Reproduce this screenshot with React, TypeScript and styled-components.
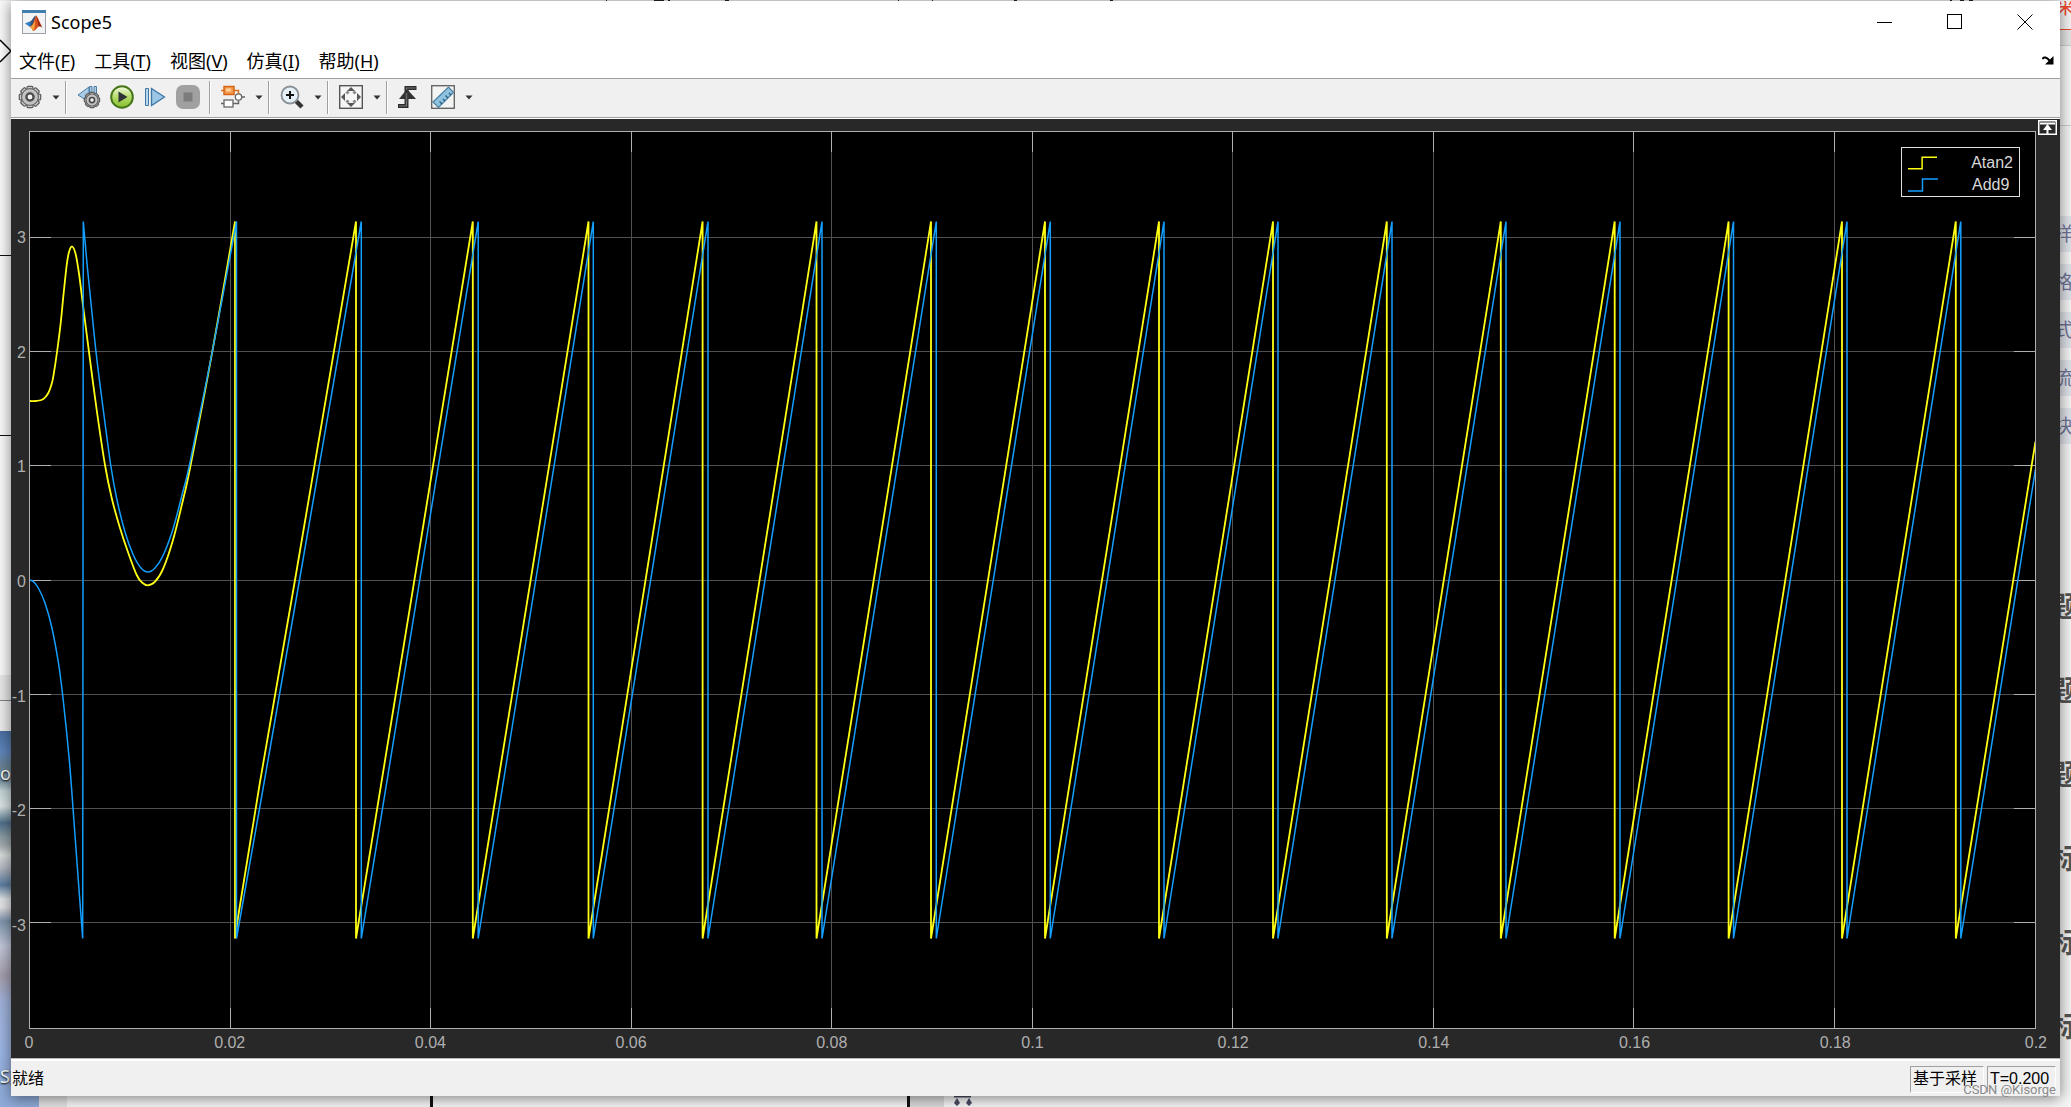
import React from "react";
import styled, { createGlobalStyle } from "styled-components";

const uiFont = `"Noto Sans", "Noto Sans CJK SC", sans-serif`;
const plotFont = `"Liberation Sans", "Noto Sans CJK SC", sans-serif`;

const GlobalStyle = createGlobalStyle`
  * { box-sizing: border-box; }
  body { margin: 0; background: #f4f4f4; font-family: ${uiFont}; }
  svg { display: block; }
`;

/* ---------- desktop behind the window ---------- */

const Desktop = styled.div`
  display: grid;
  grid-template-columns: 11px minmax(0, 1fr) 11px;
  grid-template-rows: 1px minmax(0, 1fr) 11px;
  height: 100vh;
  overflow: hidden;
`;

const TopStrip = styled.div`
  grid-column: 1 / 4;
  background: #ededed;
  display: flex;
`;

const Speck = styled.span<{ $gap: number; $w: number }>`
  width: ${(p) => p.$w}px;
  height: 1px;
  margin-left: ${(p) => p.$gap}px;
  background: #222;
`;

const LeftStrip = styled.div`
  display: flex;
  flex-direction: column;
  overflow: hidden;
  background: #fafafa;
`;

const LeftBlock = styled.div<{ $h: number; $bg?: string; $line?: string }>`
  flex: 0 0 ${(p) => p.$h}px;
  background: ${(p) => p.$bg || "#fafafa"};
  border-bottom: ${(p) => (p.$line ? `1px solid ${p.$line}` : "0")};
`;

const WireTip = styled.svg`
  flex-shrink: 0;
`;

const Wallpaper = styled.div`
  flex: 1;
  display: flex;
  flex-direction: column;
  justify-content: space-between;
  padding: 30px 0 8px;
  overflow: hidden;
  color: #fff;
  font-size: 18px;
  line-height: 24px;
  text-shadow: 0 1px 2px #000;
  white-space: nowrap;
  background: linear-gradient(
    #4a6f9f 0, #5f86bd 20px, #6a8292 36px, #7b93a0 50px, #c4d4d6 60px, #dce5e6 75px,
    #50708a 92px, #8d9da5 106px, #a3abb0 114px, #d8dedd 124px, #b9bcc4 136px, #5b7ea0 154px,
    #dfe4e4 168px, #e5e3e6 176px, #7f95ad 190px, #c3c9dc 215px, #a79fae 245px, #a1b3da 270px,
    #9db7e6 320px, #8fabd9 365px
  );
`;

const RightStrip = styled.div`
  display: flex;
  flex-direction: column;
  overflow: hidden;
  background: #f5f5f5;
`;

const RedTab = styled.div`
  flex: 0 0 29px;
  border-bottom: 1px solid #f04a2d;
  color: #f04a2d;
  font-size: 20px;
  line-height: 12px;
  display: flex;
  justify-content: center;
`;

const GreyTab = styled.div<{ $h: number; $bg: string }>`
  flex: 0 0 ${(p) => p.$h}px;
  background: ${(p) => p.$bg};
  border-bottom: 1px solid #cfcfcf;
`;

const Tags = styled.div`
  display: flex;
  flex-direction: column;
  gap: 12px;
  padding-top: 90px;
`;

const Tag = styled.span`
  display: flex;
  justify-content: center;
  height: 36px;
  padding-right: 4px;
  background: #dfe4ea;
  color: #6f7396;
  font-size: 19px;
  line-height: 36px;
`;

const Headings = styled.div`
  display: flex;
  flex-direction: column;
  gap: 44px;
  padding-top: 142px;
`;

const Heading = styled.span`
  display: flex;
  justify-content: center;
  color: #555;
  font-size: 28px;
  font-weight: 700;
  line-height: 40px;
`;

const BottomStrip = styled.div`
  grid-column: 1 / 4;
  display: flex;
  background: #f7f7f7;
  overflow: hidden;
`;

const BottomBlock = styled.div<{ $w: number; $bg?: string; $edge?: string }>`
  flex: 0 0 ${(p) => p.$w}px;
  background: ${(p) => p.$bg || "#f7f7f7"};
  border-right: ${(p) => (p.$edge ? `3px solid ${p.$edge}` : "0")};
`;

/* ---------- window ---------- */

const Window = styled.main`
  position: relative;
  z-index: 1;
  display: flex;
  flex-direction: column;
  min-width: 0;
  background: #fff;
  box-shadow: 0 2px 14px rgba(0, 0, 0, 0.5);
`;

const TitleBar = styled.header`
  display: flex;
  align-items: center;
  height: 42px;
  padding: 0 0 0 11px;
`;

const Title = styled.h1`
  flex: 1;
  margin: 0 0 0 5px;
  font-size: 18px;
  line-height: 24px;
  font-weight: 400;
  color: #000;
`;

const CaptionButton = styled.button`
  display: grid;
  place-items: center;
  width: 70px;
  height: 42px;
  padding: 0;
  border: 0;
  background: transparent;
`;

const MenuBar = styled.nav`
  display: flex;
  align-items: center;
  gap: 19px;
  height: 35px;
  padding: 0 6px 0 8px;
`;

const MenuButton = styled.button`
  padding: 0;
  border: 0;
  background: transparent;
  color: #000;
  font-family: ${uiFont};
  font-size: 18px;
  line-height: 26px;
  white-space: nowrap;

  u { text-underline-offset: 2px; text-decoration-thickness: 1px; }
`;

const DockButton = styled.button`
  margin-left: auto;
  padding: 0;
  border: 0;
  background: transparent;
`;

const Toolbar = styled.div`
  display: flex;
  align-items: center;
  height: 40px;
  padding: 0 7px 2px;
  border-top: 1px solid #a0a0a0;
  border-bottom: 1px solid #a0a0a0;
  background: #f0f0f0;
`;

const ToolButton = styled.button<{ $gap?: boolean }>`
  width: 24px;
  height: 24px;
  margin-left: ${(p) => (p.$gap ? 9 : 0)}px;
  padding: 0;
  border: 0;
  background: transparent;
`;

const CaretButton = styled.button`
  display: grid;
  place-items: center;
  width: 12px;
  height: 24px;
  margin-left: 8px;
  padding: 0;
  border: 0;
  background: transparent;
`;

const Separator = styled.span<{ $before: number }>`
  width: 2px;
  height: 33px;
  margin: 0 10px 0 ${(p) => p.$before}px;
  border-left: 1px solid #a0a0a0;
  border-right: 1px solid #fff;
`;

/* ---------- scope display ---------- */

const Display = styled.section`
  position: relative;
  flex: 1;
  min-height: 0;
  display: grid;
  grid-template-columns: 18px minmax(0, 1fr);
  grid-template-rows: minmax(0, 1fr) 29px;
  margin-top: 1px;
  padding: 12px 24px 0 0;
  background: #282828;
  color: #afafaf;
  font-family: ${plotFont};
  font-size: 16px;
`;

const YAxis = styled.div`
  display: flex;
  flex-direction: column;
  padding-right: 3px;

  &::before, &::after { content: ""; flex: 0.43; }
`;

const YTick = styled.span`
  flex: 1;
  display: flex;
  align-items: center;
  justify-content: flex-end;
  padding-top: 4px;
`;

const Plot = styled.div`
  position: relative;
  min-width: 0;
  min-height: 0;
  border: 1px solid #afafaf;
  background: #000;
`;

const Traces = styled.svg`
  width: 100%;
  height: 100%;

  path { fill: none; vector-effect: non-scaling-stroke; }
`;

const XAxis = styled.div`
  grid-column: 2;
  display: flex;
  justify-content: space-between;
  padding-top: 4px;
  line-height: 20px;
`;

const XTick = styled.span`
  display: flex;
  justify-content: center;
  width: 0;
`;

const Legend = styled.ul`
  position: absolute;
  top: 15px;
  right: 15px;
  width: 119px;
  margin: 0;
  padding: 4px 6px 0 6px;
  list-style: none;
  border: 1px solid #e0e0e0;
  background: #000;
  color: #d8d8d8;
`;

const LegendItem = styled.li`
  display: flex;
  align-items: center;
  gap: 34px;
  height: 22px;
  line-height: 22px;
`;

const MaximizeAxes = styled.button`
  position: absolute;
  top: 1px;
  right: 3px;
  padding: 0;
  border: 0;
  background: transparent;
`;

const StatusBar = styled.footer`
  position: relative;
  display: flex;
  align-items: center;
  gap: 3px;
  height: 38px;
  padding: 3px 4px 0 1px;
  border-top: 1px solid #b8b8b8;
  background: linear-gradient(#fff 2px, #f0f0f0 2px);
  font-family: ${plotFont};
  font-size: 16px;
  line-height: 24px;
  color: #000;
`;

const Ready = styled.span`
  flex: 1;
`;

const StatusCell = styled.span<{ $w: number }>`
  width: ${(p) => p.$w}px;
  height: 27px;
  padding-left: 2px;
  border: 1px solid;
  border-color: #a0a0a0 #fff #fff #a0a0a0;
`;

const Watermark = styled.span`
  position: absolute;
  right: 4px;
  bottom: -2px;
  color: #8a8a8a;
  font-family: Roboto, sans-serif;
  font-size: 13px;
  line-height: 16px;
`;

/* ---------- data ---------- */

type Pt = [number, number];
const W = 2005;
const H = 896;
const TOP = 221.5;
const BOTTOM = 938.5;

const yellowCurve: Pt[] = [
  [30, 401], [36, 401], [41.5, 400], [45, 397.5], [48.3, 393], [51, 386], [53.3, 376.7], [57.3, 350],
  [60.7, 323], [63.3, 296.7], [66.7, 265], [69, 252], [72, 246.5], [75.5, 253.5], [79, 273.5],
  [82.7, 303], [88.3, 346.7], [96.7, 410], [105, 465], [111.7, 498], [120, 528], [128.3, 553],
  [136.7, 575], [142, 582.5], [148, 585.3], [155, 581.7], [163.3, 568.3],
  [173, 540], [183, 500], [190.3, 466.7], [212.3, 351.7], [235, TOP],
];
const yellowRecovery: Pt[] = [[235, BOTTOM], [240, 905], [260, 782], [295, 580], [356, TOP]];

const blueFall: Pt[] = [
  [30, 580], [33.3, 581.5], [38.3, 588], [45, 603], [51.7, 627], [58.3, 662], [63, 698], [69, 756.7],
  [73, 808], [78.3, 880], [82.7, BOTTOM],
];
const blueCurve: Pt[] = [
  [83.3, TOP], [87.3, 266.7], [91.7, 310], [96, 351.7], [102, 400],
  [110.7, 465], [117, 500], [125, 532], [133.3, 555], [141, 568], [148, 572], [155, 568],
  [163.3, 555], [173.3, 528], [183.3, 490], [190.5, 460], [212.3, 351.7], [236.5, TOP],
];
const blueRecovery: Pt[] = [[236.5, BOTTOM], [260, 806], [299.5, 580], [361.3, TOP]];

const yellowDrops = [356, 472.8, 588.5, 702.6, 816.5, 931, 1045, 1159, 1273, 1386.8, 1500.8, 1614.7, 1728.6, 1842, 1955.8];
const blueDrops = [361.3, 478.2, 593.3, 708, 822, 936.3, 1050.3, 1164, 1278, 1392, 1506, 1620, 1733.5, 1847, 1960.8];

const at = ([x, y]: Pt) => `${(x - 30).toFixed(1)} ${(y - 132).toFixed(1)}`;

// Catmull-Rom spline through the points, written as cubic segments.
const smooth = (pts: Pt[]) =>
  pts
    .slice(1)
    .map((p2, i) => {
      const p1 = pts[i];
      const p0 = pts[i - 1] || p1;
      const p3 = pts[i + 2] || p2;
      const c1: Pt = [p1[0] + (p2[0] - p0[0]) / 6, p1[1] + (p2[1] - p0[1]) / 6];
      const c2: Pt = [p2[0] - (p3[0] - p1[0]) / 6, p2[1] - (p3[1] - p1[1]) / 6];
      return `C${at(c1)} ${at(c2)} ${at(p2)}`;
    })
    .join("");

const toPath = (curves: Pt[][], drops: number[], end: Pt) => {
  const teeth = drops.flatMap<Pt>((x) => [[x, TOP], [x, BOTTOM]]);
  const start = curves.map((c, i) => (i ? "L" : "M") + at(c[0]) + smooth(c)).join("");
  return start + [...teeth, end].map((p) => "L" + at(p)).join("");
};

const yellowPath = toPath([yellowCurve, yellowRecovery], yellowDrops, [2035.5, 441.5]);
const bluePath = toPath([blueFall, blueCurve, blueRecovery], blueDrops, [2035.5, 469]);

const gridX = Array.from({ length: 9 }, (_, i) => Math.floor(200.45 * (i + 1)) + 0.5);
const gridY = [105.5, 219.5, 333.5, 448.5, 562.5, 676.5, 790.5];

const gridPath = gridX.map((x) => `M${x} 0V${H}`).join("") + gridY.map((y) => `M0 ${y}H${W}`).join("");
const tickPath =
  gridX.map((x) => `M${x} 0V20M${x} ${H - 20}V${H}`).join("") +
  gridY.map((y) => `M0 ${y}H21M${W - 21} ${y}H${W}`).join("");

const yTicks = ["3", "2", "1", "0", "-1", "-2", "-3"];
const xTicks = ["0", "0.02", "0.04", "0.06", "0.08", "0.1", "0.12", "0.14", "0.16", "0.18", "0.2"];
const menus: [string, string][] = [["文件", "F"], ["工具", "T"], ["视图", "V"], ["仿真", "I"], ["帮助", "H"]];
const legend: [string, string][] = [["Atan2", "#ffff13"], ["Add9", "#149fff"]];
const specks: [number, number][] = [[606, 1], [47, 10], [4, 2], [55, 4], [169, 1], [33, 1], [81, 3], [93, 3], [837, 2], [8, 4], [5, 4]];

/* ---------- icons ---------- */

const MatlabIcon = () => (
  <svg width="24" height="24" viewBox="0 0 24 24">
    <rect x="0.5" y="0.5" width="23" height="23" fill="#f1f3f5" stroke="#9aa0a6" />
    <path d="M0 0h24v3H0z" fill="#3f7fae" />
    <path d="M3 13.5l6-2.5 2.5 3L8 17z" fill="#2f7fc0" />
    <path d="M9 11c2-1.500 3-5.500 5-5.500L11.500 14 8 17z" fill="#35507c" />
    <path d="M14 5.500c2 1 4 8 6.500 12-2-1.500-3.500-1.500-4.500-.5-1.500 1.500-2.500 3.500-5 4-.5-1.500-1.500-3-3-4C11.500 16 12.500 8 14 5.500z" fill="#d9531e" />
    <path d="M8 17c2-.6 3.500-3 4.800-6.500.8 3 .2 8-1.800 10.500-.5-1.500-1.500-3-3-4z" fill="#f2a23a" />
    <path d="M14 5.500c1.500 2 3.500 8.500 6.500 12-1.500-1.200-2.700-1.500-3.700-1.100C16 13 15 9 14 5.500z" fill="#8f2315" />
  </svg>
);

const GearShape = ({ cx, cy, r }: { cx: number; cy: number; r: number }) => (
  <g>
    {Array.from({ length: 8 }, (_, i) => (
      <rect
        key={i}
        x={cx - r * 0.28}
        y={cy - r * 1.02}
        width={r * 0.56}
        height={r * 0.5}
        rx={r * 0.1}
        fill="#c9c9c9"
        stroke="#5a5a5a"
        strokeWidth="1.200"
        transform={`rotate(${i * 45} ${cx} ${cy})`}
      />
    ))}
    <circle cx={cx} cy={cy} r={r * 0.8} fill="#cfcfcf" stroke="#666" strokeWidth="1.200" />
    <circle cx={cx} cy={cy} r={r * 0.66} fill="#c0c0c0" />
    <circle cx={cx} cy={cy} r={r * 0.34} fill="#f4f4f4" stroke="#4a4a4a" strokeWidth={r * 0.22} />
  </g>
);

const GearIcon = () => (
  <svg width="24" height="24" viewBox="0 0 24 24"><GearShape cx={12} cy={12} r={10.500} /></svg>
);

const StepBackIcon = () => (
  <svg width="24" height="24" viewBox="0 0 24 24">
    <path d="M1 10L12 2v15z" fill="#a9cbe6" stroke="#4c7da6" />
    <path d="M12.500 1.500H15V14h-2.500zM17 1.500h2.500V14H17z" fill="#a9cbe6" stroke="#4c7da6" />
    <GearShape cx={15} cy={15} r={7.500} />
  </svg>
);

const RunIcon = () => (
  <svg width="24" height="24" viewBox="0 0 24 24">
    <defs>
      <linearGradient id="run" x1="0" y1="0" x2="0" y2="1">
        <stop offset="0" stopColor="#f5fbe6" />
        <stop offset="0.500" stopColor="#b5dc6a" />
        <stop offset="1" stopColor="#84bd2c" />
      </linearGradient>
    </defs>
    <circle cx="12" cy="12" r="10.800" fill="url(#run)" stroke="#46751a" strokeWidth="2" />
    <path d="M8.500 6.500L17.500 12l-9 5.500z" fill="#2f3336" />
  </svg>
);

const StepForwardIcon = () => (
  <svg width="24" height="24" viewBox="0 0 24 24">
    <path d="M2.500 3.500h3v17h-3z" fill="#b8d7ee" stroke="#3f76a3" />
    <path d="M8.500 3.500L21.500 12l-13 8.500z" fill="#9cc6e6" stroke="#3f76a3" strokeWidth="1.300" />
  </svg>
);

const StopIcon = () => (
  <svg width="24" height="24" viewBox="0 0 24 24">
    <rect width="24" height="24" rx="7" fill="#a0a0a0" />
    <rect x="7.500" y="7.500" width="9" height="9" fill="#7c7c7c" />
  </svg>
);

const BlocksIcon = () => (
  <svg width="24" height="24" viewBox="0 0 24 24">
    <path d="M17.500 15v3.500H12M0 18.500h3M21 12h3" fill="none" stroke="#666" strokeWidth="1.500" />
    <path d="M0 5.500h3M13 5.500h4.500v4" fill="none" stroke="#d9731d" strokeWidth="1.500" />
    <rect x="3" y="1.500" width="10" height="8" fill="#f49a4a" stroke="#d8661a" strokeWidth="1.500" />
    <rect x="5" y="3.500" width="5" height="3" fill="#fbd09e" />
    <rect x="3" y="15" width="9" height="7" fill="#fff" stroke="#666" strokeWidth="1.300" />
    <circle cx="17.500" cy="12" r="3.200" fill="#fff" stroke="#666" strokeWidth="1.300" />
  </svg>
);

const ZoomInIcon = () => (
  <svg width="24" height="24" viewBox="0 0 24 24">
    <path d="M16 16l6 6" stroke="#333" strokeWidth="4.500" />
    <circle cx="10" cy="10" r="8.500" fill="#e6f1f7" stroke="#8b9297" strokeWidth="1.800" />
    <path d="M10 6v8M6 10h8" stroke="#111" strokeWidth="2" />
  </svg>
);

const FitIcon = () => (
  <svg width="24" height="24" viewBox="0 0 24 24">
    <rect x="0.700" y="0.700" width="22.600" height="22.600" fill="#f6f6f6" stroke="#555" strokeWidth="1.400" />
    <path d="M12 2l4 4H8zM12 22l4-4H8zM2 12l4-4v8zM22 12l-4-4v8z" fill="#555" />
    <path d="M7.500 6.500l2 2M16.500 6.500l-2 2M7.500 17.500l2-2M16.500 17.500l-2-2" stroke="#888" strokeWidth="3" />
  </svg>
);

const TriggerIcon = () => (
  <svg width="24" height="24" viewBox="0 0 24 24">
    <path d="M0 21h8.500V3H18.500" fill="none" stroke="#2c2c2c" strokeWidth="4" />
    <path d="M1 21h7.500V3H17.500" fill="none" stroke="#777" strokeWidth="1.200" />
    <path d="M9 4l9 10H1z" fill="#333" />
    <path d="M8.500 17V8" stroke="#666" strokeWidth="1.500" />
  </svg>
);

const RulerIcon = () => (
  <svg width="24" height="24" viewBox="0 0 24 24">
    <rect x="0.700" y="0.700" width="22.600" height="22.600" fill="#f4f4f4" stroke="#666" strokeWidth="1.400" />
    <path d="M2 17L17.500 2l5 5.500L7.500 22.500z" fill="#8fc3e0" stroke="#4b7f9f" strokeWidth="1.200" />
    <path d="M11 19l-2.500-2.500M14 16l-2-2M17 13l-2.500-2.500M20 10l-2-2" stroke="#2d5c7d" strokeWidth="1.300" />
  </svg>
);

const Caret = () => (
  <CaretButton aria-label="more">
    <svg width="8" height="5" viewBox="0 0 8 5"><path d="M0.500 0.500h7L4 4.500z" fill="#333" /></svg>
  </CaretButton>
);

const StepGlyph = ({ color }: { color: string }) => (
  <svg width="30" height="14" viewBox="0 0 30 14">
    <path d="M0 13h14.500V1H30" fill="none" stroke={color} strokeWidth="1.500" />
  </svg>
);

/* ---------- page ---------- */

export default function App() {
  return (
    <Desktop>
      <GlobalStyle />
      <TopStrip aria-hidden="true">
        {specks.map(([gap, w], i) => <Speck key={i} $gap={gap} $w={w} />)}
      </TopStrip>

      <LeftStrip aria-hidden="true">
        <LeftBlock $h={38} />
        <WireTip width="11" height="24" viewBox="0 0 11 24">
          <path d="M0 1L11 12 0 23" fill="#fff" stroke="#000" strokeWidth="1.500" />
        </WireTip>
        <LeftBlock $h={193} $line="#111" />
        <LeftBlock $h={180} $line="#111" />
        <LeftBlock $h={239} />
        <LeftBlock $h={26} $bg="#e8e8e8" $line="#7b8088" />
        <LeftBlock $h={30} $bg="#ececec" />
        <Wallpaper>
          <span>o</span>
          <span>SI</span>
        </Wallpaper>
      </LeftStrip>

      <Window>
        <TitleBar>
          <MatlabIcon />
          <Title>Scope5</Title>
          <CaptionButton aria-label="Minimize">
            <svg width="16" height="16"><path d="M0 8.500h15" stroke="#000" /></svg>
          </CaptionButton>
          <CaptionButton aria-label="Maximize">
            <svg width="16" height="16"><rect x="0.500" y="0.500" width="14" height="14" fill="none" stroke="#000" /></svg>
          </CaptionButton>
          <CaptionButton aria-label="Close">
            <svg width="16" height="16"><path d="M0.500 0.500l15 15M15.500 0.500l-15 15" stroke="#000" /></svg>
          </CaptionButton>
        </TitleBar>

        <MenuBar>
          {menus.map(([name, key]) => (
            <MenuButton key={key}>{name}(<u>{key}</u>)</MenuButton>
          ))}
          <DockButton aria-label="Dock">
            <svg width="12" height="9" viewBox="0 0 12 9">
              <path d="M0.500 3C2 0.500 4.500 1 8 5" fill="none" stroke="#000" strokeWidth="2" />
              <path d="M11.500 0v8.500H3z" fill="#000" />
            </svg>
          </DockButton>
        </MenuBar>

        <Toolbar>
          <ToolButton aria-label="Configuration"><GearIcon /></ToolButton>
          <Caret />
          <Separator $before={3} />
          <ToolButton aria-label="Step back"><StepBackIcon /></ToolButton>
          <ToolButton $gap aria-label="Run"><RunIcon /></ToolButton>
          <ToolButton $gap aria-label="Step forward"><StepForwardIcon /></ToolButton>
          <ToolButton $gap aria-label="Stop"><StopIcon /></ToolButton>
          <Separator $before={9} />
          <ToolButton aria-label="Highlight block"><BlocksIcon /></ToolButton>
          <Caret />
          <Separator $before={3} />
          <ToolButton aria-label="Zoom in"><ZoomInIcon /></ToolButton>
          <Caret />
          <Separator $before={3} />
          <ToolButton aria-label="Fit to view"><FitIcon /></ToolButton>
          <Caret />
          <Separator $before={3} />
          <ToolButton aria-label="Trigger"><TriggerIcon /></ToolButton>
          <ToolButton $gap aria-label="Measurements"><RulerIcon /></ToolButton>
          <Caret />
        </Toolbar>

        <Display>
          <YAxis>{yTicks.map((t) => <YTick key={t}>{t}</YTick>)}</YAxis>
          <Plot>
            <Traces viewBox={`0 0 ${W} ${H}`} preserveAspectRatio="none">
              <path d={gridPath} stroke="#505050" />
              <path d={tickPath} stroke="#afafaf" />
              <path d={yellowPath} stroke="#ffff13" strokeWidth="1.800" />
              <path d={bluePath} stroke="#149fff" strokeWidth="1.500" />
            </Traces>
            <Legend>
              {legend.map(([name, color]) => (
                <LegendItem key={name}><StepGlyph color={color} />{name}</LegendItem>
              ))}
            </Legend>
          </Plot>
          <XAxis>{xTicks.map((t) => <XTick key={t}>{t}</XTick>)}</XAxis>
          <MaximizeAxes aria-label="Maximize axes">
            <svg width="19" height="15" viewBox="0 0 19 15">
              <rect x="0.750" y="0.750" width="17.500" height="13.500" fill="#282828" stroke="#fff" strokeWidth="1.500" />
              <path d="M2 3.500h15M9.500 14V7" stroke="#fff" strokeWidth="2" />
              <path d="M9.500 4l4.500 6H5z" fill="#fff" />
            </svg>
          </MaximizeAxes>
        </Display>

        <StatusBar>
          <Ready>就绪</Ready>
          <StatusCell $w={74}>基于采样</StatusCell>
          <StatusCell $w={69}>T=0.200</StatusCell>
          <Watermark>CSDN @Kisorge</Watermark>
        </StatusBar>
      </Window>

      <RightStrip aria-hidden="true">
        <RedTab>采</RedTab>
        <GreyTab $h={16} $bg="#e6e6e6" />
        <GreyTab $h={80} $bg="#f7f7f7" />
        <Tags>{["样", "格", "式", "流", "块"].map((t) => <Tag key={t}>{t}</Tag>)}</Tags>
        <Headings>{["题", "题", "题", "标", "标", "标"].map((t, i) => <Heading key={i}>{t}</Heading>)}</Headings>
      </RightStrip>

      <BottomStrip aria-hidden="true">
        <BottomBlock $w={39} $bg="#8fabd9" />
        <BottomBlock $w={28} $bg="#e4e4e4" />
        <BottomBlock $w={366} $edge="#111" />
        <BottomBlock $w={477} $edge="#111" />
        <BottomBlock $w={34} $bg="#dcdcdc" />
        <BottomBlock $w={9} />
        <svg width="20" height="11" viewBox="0 0 20 11">
          <path d="M1 0.500h17" stroke="#4a4d63" strokeWidth="2" />
          <path d="M4 2l3 5-3 3-3-3zM16 2l3 5-3 3-3-3z" fill="#4a4d63" />
        </svg>
      </BottomStrip>
    </Desktop>
  );
}
